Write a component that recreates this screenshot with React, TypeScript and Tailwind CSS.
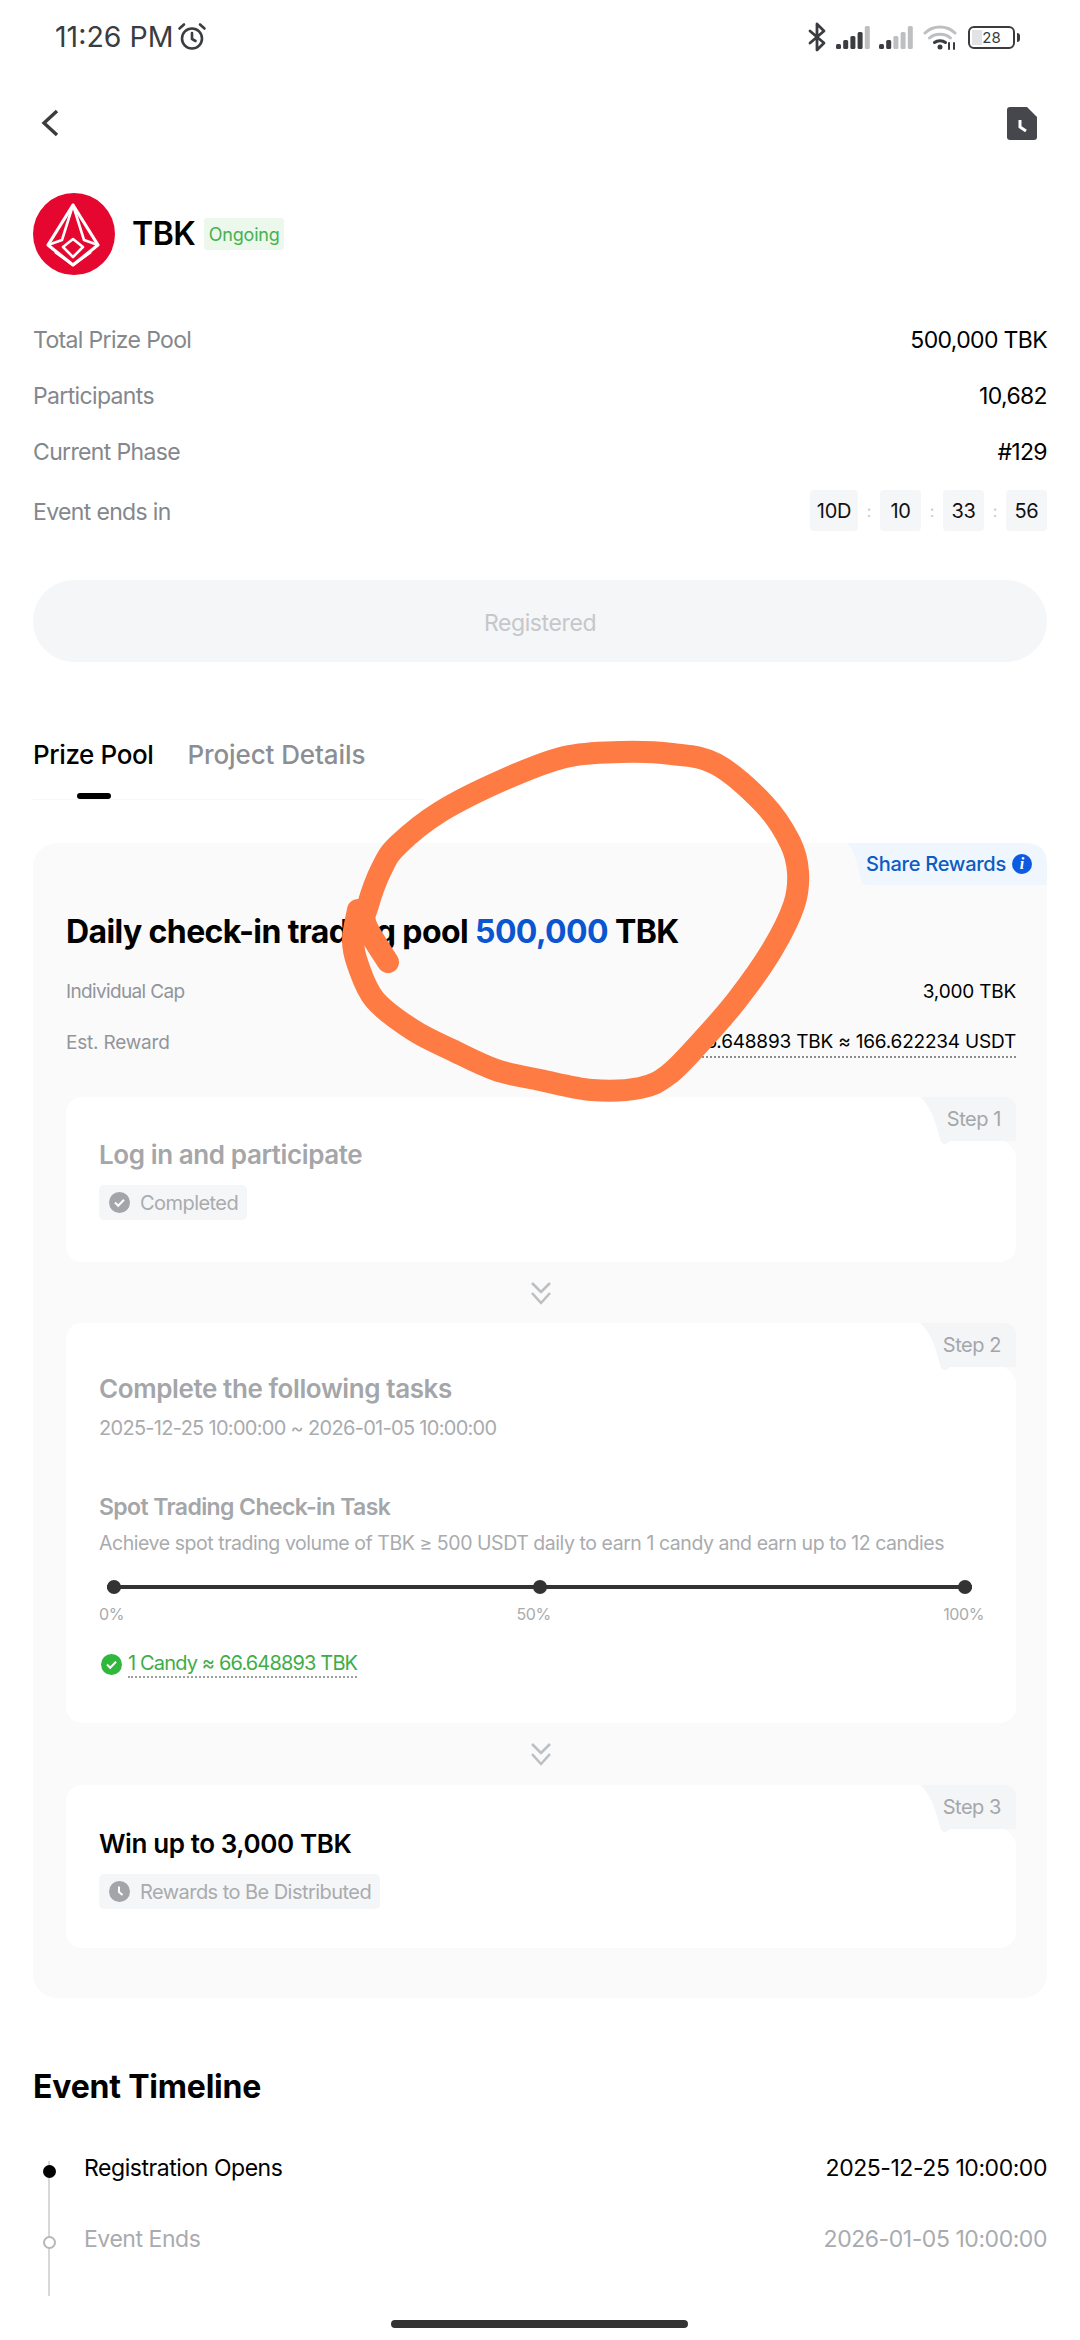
const sans = 'font-["Inter","Liberation_Sans",sans-serif]';

// hand-drawn circle on top of the screenshot, smoothed through these points
const scribble: [number, number][] = [
  [388, 962], [366, 925], [368, 905], [382, 868], [398, 845], [440, 812], [503, 780], [565, 757], [620, 752],
  [672, 754], [716, 764], [764, 804], [790, 842], [798, 872], [794, 905], [772, 950], [737, 1000], [698, 1045],
  [668, 1075], [640, 1088], [592, 1090], [540, 1080], [496, 1070], [452, 1050], [413, 1030], [375, 1000], [358, 965],
  [353, 940], [358, 910],
];

function smoothPath(pts: [number, number][]) {
  let d = `M${pts[0][0]} ${pts[0][1]}`;
  for (let i = 0; i < pts.length - 1; i++) {
    const p0 = pts[i - 1] ?? pts[i];
    const p1 = pts[i];
    const p2 = pts[i + 1];
    const p3 = pts[i + 2] ?? p2;
    const c1x = p1[0] + (p2[0] - p0[0]) / 6;
    const c1y = p1[1] + (p2[1] - p0[1]) / 6;
    const c2x = p2[0] - (p3[0] - p1[0]) / 6;
    const c2y = p2[1] - (p3[1] - p1[1]) / 6;
    d += `C${c1x} ${c1y} ${c2x} ${c2y} ${p2[0]} ${p2[1]}`;
  }
  return d;
}

function Bars({ on }: { on: number }) {
  const heights = [5, 9, 13, 17, 23];
  return (
    <svg width="34" height="24" viewBox="0 0 34 24">
      {heights.map((h, i) => (
        <rect key={i} x={i * 7.2} y={24 - h} width="5" height={h} rx="1.5" fill={i < on ? '#3b3d40' : '#bdbfc1'} />
      ))}
    </svg>
  );
}

function StatusBar() {
  return (
    <div className="flex h-[74px] items-center justify-between pl-[55px] pr-[60px]">
      <div className="flex items-center gap-[4px]">
        <span className="text-[28.500px] leading-none text-[#3a3c3f]">11:26 PM</span>
        <svg width="30" height="30" viewBox="0 0 30 30" fill="none" stroke="#3a3c3f" strokeWidth="2.6" strokeLinecap="round">
          <circle cx="15" cy="16.5" r="10" />
          <path d="M15 11v6l3.5 2" />
          <path d="M2.5 6.5 7 2.5M27.5 6.5 23 2.5" />
        </svg>
      </div>
      <div className="flex items-center">
        <svg width="18" height="30" viewBox="0 0 18 30" fill="none" stroke="#3a3c3f" strokeWidth="2.8" strokeLinejoin="round" strokeLinecap="round">
          <path d="M2 9l14 12-7 7V2l7 7L2 21" />
        </svg>
        <div className="ml-[10px]"><Bars on={4} /></div>
        <div className="ml-[9px]"><Bars on={2} /></div>
        <svg className="ml-[10px]" width="34" height="26" viewBox="0 0 34 26" fill="none" strokeLinecap="round">
          <path d="M2 9C10 1 24 1 32 9" stroke="#bdbfc1" strokeWidth="3" />
          <path d="M6.500 14C12 9 22 9 27.500 14" stroke="#bdbfc1" strokeWidth="3" />
          <path d="M11.500 18.500c3-2.500 8-2.500 11 0" stroke="#3a3c3f" strokeWidth="3" />
          <circle cx="17" cy="23" r="2.500" fill="#3a3c3f" />
          <path d="M26 19v6M31 19v6" stroke="#3a3c3f" strokeWidth="2" />
        </svg>
        <div className="ml-[11px] flex items-center">
          <div className="relative flex h-[23px] w-[47px] items-center justify-center overflow-hidden rounded-[6px] border-2 border-[#3a3c3f]">
            <div className="absolute inset-y-[2px] left-[2px] w-[10px] bg-[#e2e3e4]" />
            <span className="relative text-[15px] leading-none text-[#3a3c3f]">28</span>
          </div>
          <div className="ml-[2px] h-[9px] w-[3px] rounded-r bg-[#3a3c3f]" />
        </div>
      </div>
    </div>
  );
}

function Logo() {
  return (
    <svg width="82" height="82" viewBox="0 0 82 82" fill="none" stroke="#fff" strokeWidth="2.600" strokeLinejoin="round">
      <circle cx="41" cy="41" r="41" fill="#e5072f" stroke="none" />
      <path d="M40 12 15 52l25 20 25-20z" strokeWidth="3.200" />
      <path d="M40 12 29 47 15 52M40 12l11 35 14 5M30 54l10-8 10 8-10 10zM22 59l18 13M58 59 40 72" />
    </svg>
  );
}

function InfoRow({ label, value }: { label: string; value: string }) {
  return (
    <div className="flex h-[56px] items-center justify-between text-[23px] tracking-[-0.65px]">
      <span className="text-[#84878b]">{label}</span>
      <span className="text-black">{value}</span>
    </div>
  );
}

function TimeBox({ text, w }: { text: string; w: string }) {
  return (
    <div className={`flex h-[41px] items-center justify-center rounded-[4px] bg-[#f5f6f7] text-[20px] tracking-[-0.3px] text-[#111] ${w}`}>{text}</div>
  );
}

function TimeSep() {
  return <span className="flex w-[22px] justify-center text-[16px] text-[#c8cacc]">:</span>;
}

function StepTag({ n }: { n: number }) {
  return (
    <div className="absolute right-0 top-0 h-[58px] w-[96px]">
      <svg className="absolute inset-0" width="96" height="58" viewBox="0 0 96 58">
        <path d="M96 44H84Q92 48 96 58Z" fill="#fafafa" />
        <path d="M0 0H82Q96 0 96 12V44H30L26 47Q22 48 20 42C15 20 8 6 0 0Z" fill="#f3f5f6" />
      </svg>
      <span className="absolute right-[15px] top-[7px] text-[20px] leading-[30px] tracking-[-0.45px] text-[#a4a7aa]">Step {n}</span>
    </div>
  );
}

function Chevrons({ h }: { h: string }) {
  return (
    <div className={`flex items-center justify-center ${h}`}>
      <svg width="22" height="24" viewBox="0 0 22 24" fill="none" stroke="#bcc0c3" strokeWidth="2.6" strokeLinejoin="round">
        <path d="M2 2l9 9 9-9M2 12l9 10 9-10" />
      </svg>
    </div>
  );
}

function StatusBadge({ text, kind }: { text: string; kind: 'check' | 'clock' }) {
  return (
    <div className="flex h-[35px] w-fit items-center gap-[10px] rounded-[5px] bg-[#f5f6f7] pl-[10px] pr-[9px]">
      <svg width="21" height="21" viewBox="0 0 21 21" fill="none">
        <circle cx="10.500" cy="10.500" r="10.500" fill="#a3a5a9" />
        {kind === 'check' ? (
          <path d="M6 10.500l3.200 3.200 5.800-6" stroke="#fff" strokeWidth="2" />
        ) : (
          <path d="M10 5.500v5.500l3.500 3" stroke="#fff" strokeWidth="2" />
        )}
      </svg>
      <span className="text-[20px] tracking-[-0.55px] text-[#a9abae]">{text}</span>
    </div>
  );
}

export default function App() {
  return (
    <div className={`relative h-[2340px] w-[1080px] overflow-hidden bg-white ${sans}`}>
      <StatusBar />

      {/* Nav */}
      <div className="mt-[32px] flex h-[34px] items-center justify-between pl-[41px] pr-[43px]">
        <svg width="18" height="28" viewBox="0 0 18 28" fill="none" stroke="#3a3c3f" strokeWidth="3.400">
          <path d="M16 2 3 14l13 12" />
        </svg>
        <svg width="30" height="33" viewBox="0 0 30 33">
          <path d="M3 0h17l10 10v20a3 3 0 0 1-3 3H3a3 3 0 0 1-3-3V3a3 3 0 0 1 3-3z" fill="#45474d" />
          <path d="M13 13v7l6 4" fill="none" stroke="#fff" strokeWidth="3" />
        </svg>
      </div>

      {/* Header */}
      <div className="mt-[53px] flex items-center pl-[33px]">
        <Logo />
        <span className="ml-[17px] text-[32px] font-semibold leading-none tracking-[-0.5px] text-black">TBK</span>
        <span className="ml-[9px] flex h-[32px] w-[80px] items-center justify-center rounded-[3px] bg-[#ecf8ec] text-[18px] tracking-[-0.2px] text-[#45b24f]">Ongoing</span>
      </div>

      {/* Summary */}
      <div className="mt-[37px] px-[33px]">
        <InfoRow label="Total Prize Pool" value="500,000 TBK" />
        <InfoRow label="Participants" value="10,682" />
        <InfoRow label="Current Phase" value="#129" />
        <div className="mt-[10px] flex h-[41px] items-center justify-between">
          <span className="pt-[3px] text-[23px] tracking-[-0.65px] text-[#84878b]">Event ends in</span>
          <div className="flex items-center">
            <TimeBox text="10D" w="w-[48px]" />
            <TimeSep />
            <TimeBox text="10" w="w-[41px]" />
            <TimeSep />
            <TimeBox text="33" w="w-[41px]" />
            <TimeSep />
            <TimeBox text="56" w="w-[41px]" />
          </div>
        </div>
        <div className="mt-[49px] flex h-[82px] items-center justify-center rounded-full bg-[#f5f6f7] pt-[4px] text-[23px] tracking-[-0.4px] text-[#c5c7ca]">Registered</div>
      </div>

      {/* Tabs */}
      <div className="mx-[33px] mt-[73px] w-[392px] border-b border-[#f7f7f7]">
        <div className="flex items-center gap-[34px] text-[26px] font-medium">
          <span className="tracking-[-0.4px] text-black">Prize Pool</span>
          <span className="tracking-[-0.1px] text-[#8b8e92]">Project Details</span>
        </div>
        <div className="ml-[44px] mt-[19px] h-[6px] w-[34px] rounded-full bg-black" />
      </div>

      {/* Prize card */}
      <div className="relative mx-[33px] mt-[43px] h-[1155px] rounded-[24px] bg-[#fafafa] pl-[33px] pr-[31px]">
        <div className="absolute right-0 top-0 h-[42px] w-[200px]">
          <svg className="absolute inset-0" width="200" height="42" viewBox="0 0 200 42">
            <path d="M0 0H178Q200 0 200 22V42H18Q15 42 13 33C10 18 7 6 0 0Z" fill="#eff6fd" />
          </svg>
          <div className="absolute right-[15px] top-[6px] flex h-[30px] items-center gap-[6px]">
            <span className="text-[20px] font-medium tracking-[-0.25px] text-[#0b5cc4]">Share Rewards</span>
            <span className="flex h-[20px] w-[20px] items-center justify-center rounded-full bg-[#0c5be0] font-['Liberation_Serif',serif] text-[16px] font-bold italic leading-none text-white">i</span>
          </div>
        </div>
        <div className="whitespace-nowrap pt-[67px] text-[32px] font-bold leading-[44px] tracking-[-0.6px] text-black">
          Daily check-in trading pool <span className="text-[#0b55d0]">500,000</span> TBK
        </div>
        <div className="mt-[23px] flex h-[30px] items-center justify-between text-[19px] tracking-[-0.2px]">
          <span className="tracking-[-0.65px] text-[#92959a]">Individual Cap</span>
          <span className="text-black">3,000 TBK</span>
        </div>
        <div className="mt-[21px] flex h-[30px] items-center justify-between text-[19px] tracking-[-0.2px]">
          <span className="text-[#92959a]">Est. Reward</span>
          <span className="border-b-2 border-dotted border-[#8a8c90] text-black">66.648893 TBK ≈ 166.622234 USDT</span>
        </div>

        {/* Step 1 */}
        <div className="relative mt-[39px] h-[165px] rounded-[16px] bg-white px-[33px] pt-[39px]">
          <StepTag n={1} />
          <div className="text-[26px] font-semibold leading-[38px] tracking-[-0.4px] text-[#a4a6a9]">Log in and participate</div>
          <div className="mt-[11px]"><StatusBadge text="Completed" kind="check" /></div>
        </div>
        <Chevrons h="h-[61px]" />

        {/* Step 2 */}
        <div className="relative h-[400px] rounded-[16px] bg-white px-[33px] pt-[47px]">
          <StepTag n={2} />
          <div className="text-[26px] font-semibold leading-[38px] tracking-[-0.4px] text-[#a4a6a9]">Complete the following tasks</div>
          <div className="mt-[5px] text-[20px] leading-[30px] tracking-[-0.7px] text-[#a9abae]">2025-12-25 10:00:00 ~ 2026-01-05 10:00:00</div>
          <div className="mt-[47px] text-[23px] font-semibold leading-[34px] tracking-[-0.6px] text-[#a4a6a9]">Spot Trading Check-in Task</div>
          <div className="mt-[4px] whitespace-nowrap text-[19.500px] leading-[30px] tracking-[-0.45px] text-[#a9abae]">Achieve spot trading volume of TBK ≥ 500 USDT daily to earn 1 candy and earn up to 12 candies</div>

          {/* Progress */}
          <div className="relative ml-[8px] mt-[22px] flex h-[14px] w-[865px] items-center justify-between">
            <div className="absolute inset-x-0 h-[4px] bg-[#333]" />
            <div className="relative h-[14px] w-[14px] rounded-full bg-[#333]" />
            <div className="relative h-[14px] w-[14px] rounded-full bg-[#333]" />
            <div className="relative h-[14px] w-[14px] rounded-full bg-[#333]" />
          </div>
          <div className="mt-[10px] flex w-[885px] justify-between text-[16px] leading-[20px] tracking-[-0.4px] text-[#a9abae]">
            <span>0%</span>
            <span>50%</span>
            <span>100%</span>
          </div>

          <div className="ml-[2px] mt-[27px] flex items-center gap-[6px]">
            <svg width="21" height="21" viewBox="0 0 21 21" fill="none">
              <circle cx="10.500" cy="10.500" r="10.500" fill="#2fb83c" />
              <path d="M6 10.500l3.200 3.200 5.800-6" stroke="#fff" strokeWidth="2" />
            </svg>
            <span className="border-b-2 border-dotted border-[#9aa09b] text-[20px] leading-[25px] tracking-[-0.85px] text-[#3ead48]">1 Candy ≈ 66.648893 TBK</span>
          </div>
        </div>
        <Chevrons h="h-[62px]" />

        {/* Step 3 */}
        <div className="relative h-[163px] rounded-[16px] bg-white px-[33px] pt-[40px]">
          <StepTag n={3} />
          <div className="text-[26px] font-semibold leading-[38px] tracking-[-0.4px] text-black">Win up to 3,000 TBK</div>
          <div className="mt-[11px]"><StatusBadge text="Rewards to Be Distributed" kind="clock" /></div>
        </div>
      </div>

      {/* Timeline */}
      <div className="mt-[65px] px-[33px]">
        <div className="text-[32px] font-bold leading-[48px] tracking-[-0.2px] text-black">Event Timeline</div>
        <div className="relative mt-[40px]">
          <div className="absolute bottom-[-40px] left-[15px] top-[10px] w-[2px] bg-[#d8d8d8]" />
          <div className="flex h-[34px] items-center justify-between text-[23px] tracking-[-0.45px] text-black">
            <div className="flex items-center">
              <div className="relative ml-[10px] mt-[6px] h-[13px] w-[13px] rounded-full bg-black" />
              <span className="ml-[28px]">Registration Opens</span>
            </div>
            <span>2025-12-25 10:00:00</span>
          </div>
          <div className="mt-[37px] flex h-[34px] items-center justify-between text-[23px] tracking-[-0.45px] text-[#a9abae]">
            <div className="flex items-center">
              <div className="relative ml-[10px] mt-[6px] h-[13px] w-[13px] rounded-full border-2 border-[#b5b7b9] bg-white" />
              <span className="ml-[28px]">Event Ends</span>
            </div>
            <span>2026-01-05 10:00:00</span>
          </div>
        </div>
      </div>

      {/* Home indicator */}
      <div className="absolute bottom-[12px] left-[391px] h-[8px] w-[297px] rounded-full bg-[#333]" />

      <svg className="absolute left-0 top-0" width="1080" height="2340" fill="none">
        <path d={smoothPath(scribble)} stroke="#fe7b43" strokeWidth="22" strokeLinecap="round" strokeLinejoin="round" />
      </svg>
    </div>
  );
}
